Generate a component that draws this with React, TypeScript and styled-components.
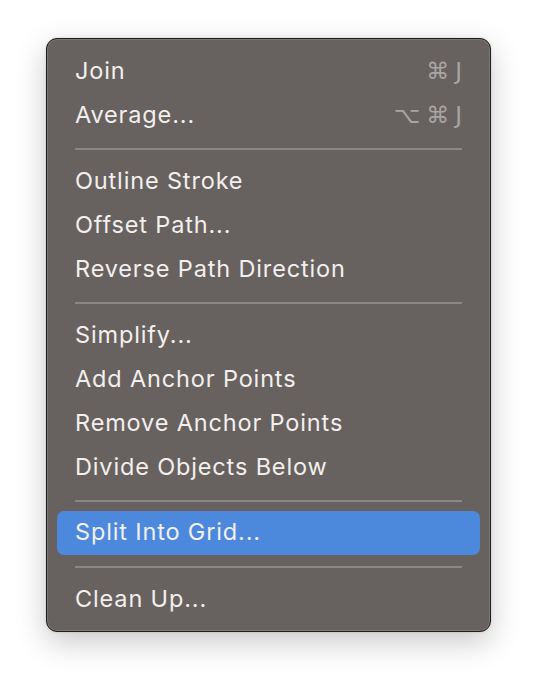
import styled, { createGlobalStyle } from 'styled-components'

const GlobalStyle = createGlobalStyle`
  html, body {
    margin: 0;
    padding: 0;
    background: #ffffff;
  }
  body {
    width: 536px;
    height: 684px;
    font-family: Inter, "Noto Sans", "DejaVu Sans", sans-serif;
    -webkit-font-smoothing: antialiased;
  }
`

const Pagina = styled.div`
  padding: 38px 0 0 46px;
`

const Menu = styled.ul`
  list-style: none;
  margin: 0;
  box-sizing: border-box;
  width: 445px;
  padding: 11px 10px 9px;
  background: #67625f;
  border: 1px solid #1f1d1c;
  border-radius: 11px;
  box-shadow:
    inset 0 0 0 1px rgba(255, 255, 255, 0.14),
    0 10px 30px rgba(0, 0, 0, 0.22),
    0 0 3px rgba(0, 0, 0, 0.12);
`

const Item = styled.li<{ $ativo?: boolean }>`
  display: flex;
  align-items: center;
  justify-content: space-between;
  box-sizing: border-box;
  height: 44px;
  padding: 0 18px 3px;
  border-radius: 7px;
  font-size: 23.5px;
  font-weight: 400;
  letter-spacing: 0.85px;
  color: #f3efee;
  background: ${({ $ativo }) => ($ativo ? '#4c89dc' : 'transparent')};
  ${({ $ativo }) => $ativo && 'margin-top: -1px; margin-bottom: 1px;'}
`

const Atalho = styled.span`
  display: flex;
  align-items: baseline;
  gap: 6px;
  color: #aaa5a3;
  font-size: 23px;
  letter-spacing: 0;
  font-family: "DejaVu Sans", sans-serif;
`

const Separador = styled.li`
  height: 22px;
  display: flex;
  align-items: center;
  padding: 0 18px;
  &::after {
    content: '';
    flex: 1;
    height: 2px;
    background: #8c8785;
  }
`

type Entrada = { rotulo: string; atalho?: string[]; ativo?: boolean } | 'sep'

const entradas: Entrada[] = [
  { rotulo: 'Join', atalho: ['⌘', 'J'] },
  { rotulo: 'Average...', atalho: ['⌥', '⌘', 'J'] },
  'sep',
  { rotulo: 'Outline Stroke' },
  { rotulo: 'Offset Path...' },
  { rotulo: 'Reverse Path Direction' },
  'sep',
  { rotulo: 'Simplify...' },
  { rotulo: 'Add Anchor Points' },
  { rotulo: 'Remove Anchor Points' },
  { rotulo: 'Divide Objects Below' },
  'sep',
  { rotulo: 'Split Into Grid...', ativo: true },
  'sep',
  { rotulo: 'Clean Up...' },
]

const App = () => {
  return (
    <Pagina>
      <GlobalStyle />
      <Menu>
        {entradas.map((e, i) =>
          e === 'sep' ? (
            <Separador key={i} />
          ) : (
            <Item key={i} $ativo={e.ativo}>
              <span>{e.rotulo}</span>
              {e.atalho && (
                <Atalho>
                  {e.atalho.map((k, j) => (
                    <span key={j}>{k}</span>
                  ))}
                </Atalho>
              )}
            </Item>
          )
        )}
      </Menu>
    </Pagina>
  )
}

export default App
